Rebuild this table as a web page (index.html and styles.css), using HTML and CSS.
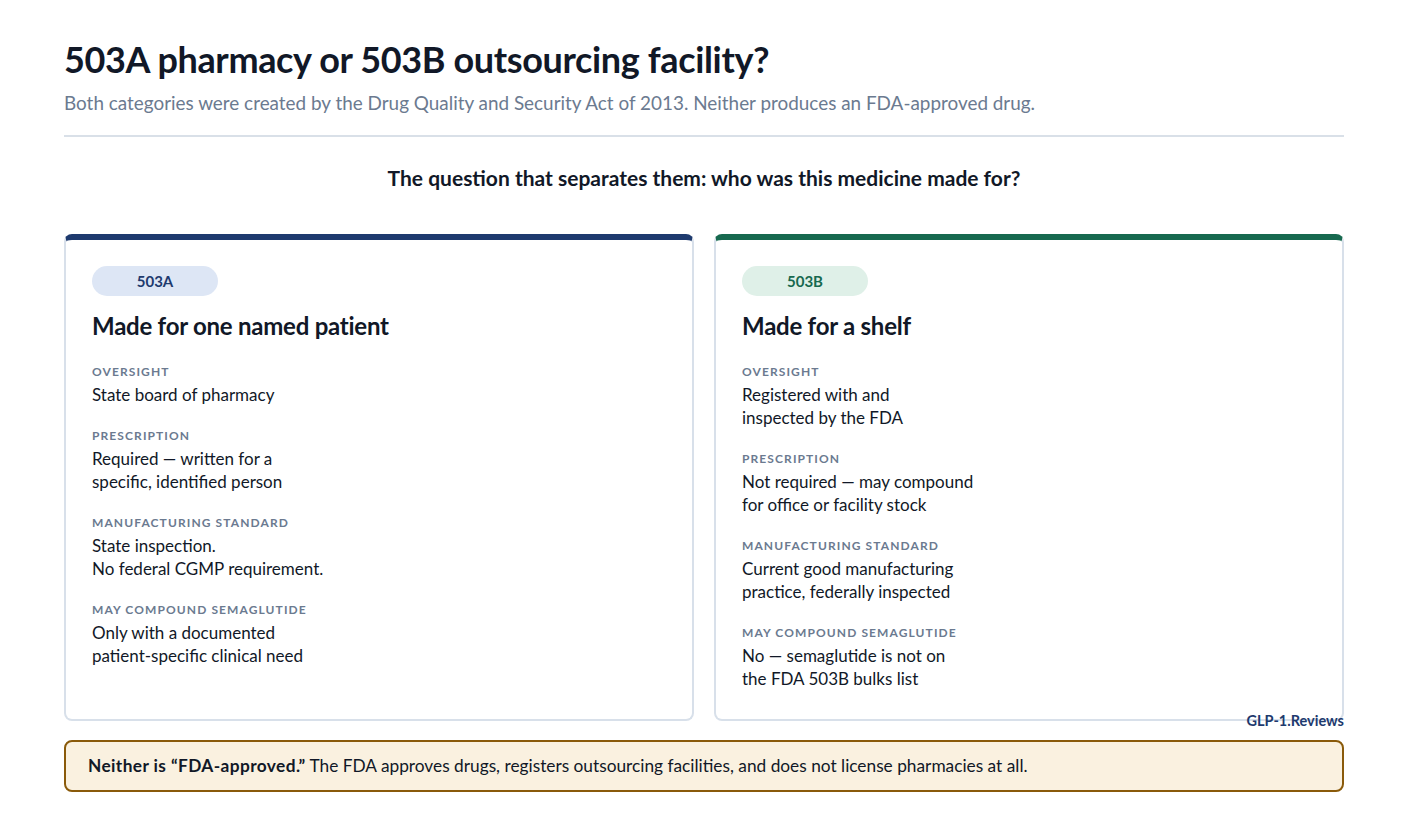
FILE: index.html
```html
<!DOCTYPE html>
<html lang="en">
<head>
<meta charset="utf-8">
<title>503A pharmacy or 503B outsourcing facility?</title>
<link rel="stylesheet" href="styles.css">
</head>
<body>
<main class="page">
  <h1 class="title">503A pharmacy or 503B outsourcing facility?</h1>
  <p class="subtitle">Both categories were created by the Drug Quality and Security Act of 2013. Neither produces an FDA-approved drug.</p>
  <hr class="divider">
  <h2 class="question">The question that separates them: who was this medicine made for?</h2>

  <div class="cards-wrap">
    <div class="cards">
      <section class="card card-a">
        <span class="pill pill-a">503A</span>
        <h3 class="card-title">Made for one named patient</h3>
        <dl class="facts">
          <dt>Oversight</dt>
          <dd>State board of pharmacy</dd>
          <dt>Prescription</dt>
          <dd>Required — written for a<br>specific, identified person</dd>
          <dt>Manufacturing standard</dt>
          <dd>State inspection.<br>No federal CGMP requirement.</dd>
          <dt>May compound semaglutide</dt>
          <dd>Only with a documented<br>patient-specific clinical need</dd>
        </dl>
      </section>
      <section class="card card-b">
        <span class="pill pill-b">503B</span>
        <h3 class="card-title">Made for a shelf</h3>
        <dl class="facts">
          <dt>Oversight</dt>
          <dd>Registered with and<br>inspected by the FDA</dd>
          <dt>Prescription</dt>
          <dd>Not required — may compound<br>for office or facility stock</dd>
          <dt>Manufacturing standard</dt>
          <dd>Current good manufacturing<br>practice, federally inspected</dd>
          <dt>May compound semaglutide</dt>
          <dd>No — semaglutide is not on<br>the FDA 503B bulks list</dd>
        </dl>
      </section>
    </div>
    <div class="brand">GLP-1.Reviews</div>
  </div>

  <p class="callout"><strong>Neither is “FDA-approved.”</strong> The FDA approves drugs, registers outsourcing facilities, and does not license pharmacies at all.</p>
</main>
</body>
</html>
```

FILE: styles.css
```css
* { box-sizing: border-box; }
html, body { margin: 0; padding: 0; background: #ffffff; }
body {
  font-family: Lato, "Open Sans", "Liberation Sans", sans-serif;
  color: #111827;
}
.page {
  padding: 36px 64px 0;
}
.title {
  margin: 0;
  font-size: 36px;
  line-height: 46px;
  font-weight: 700;
  letter-spacing: -0.01em;
  color: #111827;
}
.subtitle {
  margin: 8px 0 0;
  font-size: 18.9px;
  line-height: 26px;
  color: #6b7a90;
}
.divider {
  margin: 19px 0 0;
  border: 0;
  height: 2px;
  background: #d9e0e8;
}
.question {
  margin: 28px 0 0;
  text-align: center;
  font-size: 21px;
  line-height: 26px;
  font-weight: 700;
  color: #111827;
}
.cards-wrap {
  position: relative;
  margin-top: 43px;
}
.cards {
  display: grid;
  grid-template-columns: 1fr 1fr;
  gap: 20px;
}
.card {
  border: 2px solid #d8e0ea;
  border-top: 6px solid #1e3a6e;
  border-radius: 8px;
  padding: 26px 26px 29px;
}
.card-b { border-top-color: #17694f; }
.pill {
  display: inline-block;
  width: 126px;
  height: 30px;
  line-height: 30px;
  border-radius: 15px;
  text-align: center;
  font-size: 15px;
  font-weight: 700;
}
.pill-a { background: #dde6f5; color: #1e3a6e; }
.pill-b { background: #dff0e8; color: #17694f; }
.card-title {
  margin: 16px 0 0;
  font-size: 24px;
  line-height: 28px;
  font-weight: 700;
  letter-spacing: -0.01em;
  color: #111827;
}
.facts { margin: 24px 0 0; }
.facts dt {
  margin: 22px 0 0;
  font-size: 12px;
  line-height: 16px;
  font-weight: 700;
  letter-spacing: 1.1px;
  text-transform: uppercase;
  color: #6b7a90;
}
.facts dt:first-child { margin-top: 0; }
.facts dd {
  margin: 3px 0 0;
  font-size: 17px;
  line-height: 23px;
  color: #111827;
}
.brand {
  position: absolute;
  right: 0;
  bottom: -8px;
  font-size: 14.5px;
  line-height: 16px;
  font-weight: 700;
  color: #1e3a6e;
}
.callout {
  margin: 19px 0 0;
  background: #faf1e0;
  border: 2px solid #8a5a0a;
  border-radius: 8px;
  padding: 12px 22px;
  font-size: 17.3px;
  line-height: 24px;
  color: #111827;
}
.callout strong { font-weight: 700; letter-spacing: 0.4px; }
```
